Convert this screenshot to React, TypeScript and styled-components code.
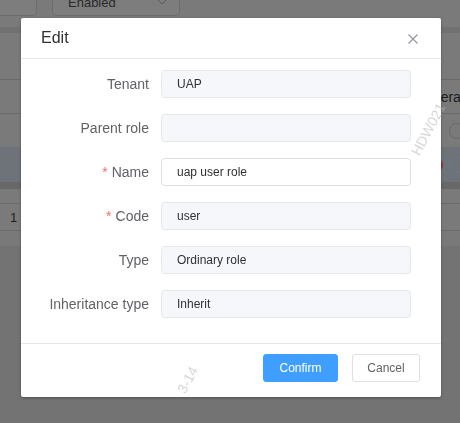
import React from "react";
import styled, { createGlobalStyle } from "styled-components";

const Global = createGlobalStyle`
  html, body { margin: 0; padding: 0; }
  body {
    background: #737373;
    font-family: "Liberation Sans", Arial, sans-serif;
    width: 460px;
    height: 423px;
    overflow: hidden;
  }
`;

const Page = styled.div`
  display: flex;
  flex-direction: column;
  width: 460px;
`;

const Toolbar = styled.div`
  display: flex;
  align-items: flex-end;
  gap: 15px;
  margin-top: -12px;
  height: 28px;
  background: #7a7a7a;
`;

const ToolBox = styled.div<{ $w: number }>`
  box-sizing: border-box;
  width: ${(p) => p.$w}px;
  height: 28px;
  border: 1px solid #6c6c6c;
  border-radius: 4px;
  background: #7d7d7d;
  display: flex;
  align-items: center;
  justify-content: space-between;
  padding: 0 12px 0 15px;
  font-size: 13px;
  color: #2a2a2a;
  &:first-child { margin-left: -40px; width: 77px; }
`;

const Band = styled.div<{ $h: number; $bg: string; $line?: boolean }>`
  box-sizing: border-box;
  height: ${(p) => p.$h}px;
  background: ${(p) => p.$bg};
  border-bottom: ${(p) => (p.$line ? "1px solid #6a6a6a" : "none")};
  display: flex;
  align-items: center;
  font-size: 13px;
  color: #1e1e1e;
`;

const IndexCell = styled.span`
  padding-left: 10px;
`;

const HeaderText = styled.span`
  margin-left: 422px;
  font-size: 14px;
  white-space: nowrap;
  color: #1a1a1a;
`;

const Actions = styled.div`
  display: flex;
  gap: 6px;
  margin-left: 427px;
`;

const Dot = styled.span<{ $c: string; $outline?: boolean }>`
  width: 16px;
  height: 16px;
  border-radius: 50%;
  box-sizing: border-box;
  background: ${(p) => (p.$outline ? "transparent" : p.$c)};
  border: 1px solid ${(p) => p.$c};
  flex: none;
`;

const Overlay = styled.div`
  position: fixed;
  inset: 0;
  display: flex;
  align-items: flex-start;
  padding: 18px 0 0 21px;
`;

const Dialog = styled.div`
  width: 420px;
  background: #fff;
  border-radius: 2px;
  box-shadow: 0 1px 3px rgba(0, 0, 0, 0.3);
  display: flex;
  flex-direction: column;
`;

const Header = styled.div`
  height: 40px;
  border-bottom: 1px solid #e4e7ed;
  display: flex;
  align-items: center;
  justify-content: space-between;
  padding: 0 23px 0 20px;
`;

const Title = styled.span`
  font-size: 16px;
  color: #303133;
  line-height: 24px;
`;

const Close = styled.button`
  border: 0;
  padding: 0;
  background: none;
  width: 10px;
  height: 10px;
  display: flex;
  margin-top: 1px;
`;

const Body = styled.div`
  padding: 11px 30px 25px 20px;
  display: flex;
  flex-direction: column;
  gap: 16px;
`;

const Row = styled.div`
  display: grid;
  grid-template-columns: 120px 250px;
  align-items: center;
`;

const Label = styled.label`
  text-align: right;
  padding-right: 12px;
  font-size: 14px;
  color: #606266;
  line-height: 28px;
  white-space: nowrap;
`;

const Star = styled.span`
  color: #f56c6c;
  margin-right: 4px;
`;

const Input = styled.div<{ $disabled?: boolean }>`
  box-sizing: border-box;
  height: 28px;
  border-radius: 4px;
  border: 1px solid ${(p) => (p.$disabled ? "#e4e7ed" : "#dcdfe6")};
  background: ${(p) => (p.$disabled ? "#f5f7fa" : "#fff")};
  padding: 0 15px;
  font-size: 12px;
  color: #303133;
  display: flex;
  align-items: center;
`;

const Footer = styled.div`
  border-top: 1px solid #e4e7ed;
  padding: 10px 21px 15px;
  display: flex;
  justify-content: flex-end;
  gap: 14px;
`;

const Button = styled.button<{ $primary?: boolean }>`
  box-sizing: border-box;
  height: 28px;
  width: ${(p) => (p.$primary ? 75 : 68)}px;
  border-radius: 3px;
  font-family: "Liberation Sans", Arial, sans-serif;
  font-size: 12px;
  border: 1px solid ${(p) => (p.$primary ? "#409eff" : "#dcdfe6")};
  background: ${(p) => (p.$primary ? "#409eff" : "#fff")};
  color: ${(p) => (p.$primary ? "#fff" : "#606266")};
  padding: 0;
`;

const Watermark = styled.span<{ $x: number; $y: number }>`
  position: fixed;
  left: ${(p) => p.$x}px;
  top: ${(p) => p.$y}px;
  transform: rotate(-62deg);
  transform-origin: left bottom;
  font-size: 14px;
  color: rgba(180, 180, 180, 0.55);
  white-space: nowrap;
  pointer-events: none;
`;

const fields: { label: string; value: string; required?: boolean; disabled?: boolean }[] = [
  { label: "Tenant", value: "UAP", disabled: true },
  { label: "Parent role", value: "", disabled: true },
  { label: "Name", value: "uap user role", required: true },
  { label: "Code", value: "user", required: true, disabled: true },
  { label: "Type", value: "Ordinary role", disabled: true },
  { label: "Inheritance type", value: "Inherit", disabled: true },
];

export default function App() {
  return (
    <>
      <Global />
      <Page>
        <Toolbar>
          <ToolBox $w={77} />
          <ToolBox $w={128}>
            <span>Enabled</span>
            <svg width="10" height="6" viewBox="0 0 10 6">
              <path d="M1 1l4 4 4-4" fill="none" stroke="#5a5a5a" strokeWidth="1" />
            </svg>
          </ToolBox>
        </Toolbar>
        <Band $h={11} $bg="#7a7a7a" />
        <Band $h={6} $bg="#717171" />
        <Band $h={47} $bg="#7a7a7a" $line />
        <Band $h={34} $bg="#7a7a7a" $line>
          <HeaderText>Operation</HeaderText>
        </Band>
        <Band $h={33} $bg="#7a7a7a">
          <Actions>
            <Dot $c="transparent" $outline />
            <Dot $c="#6a6a6a" $outline />
          </Actions>
        </Band>
        <Band $h={35} $bg="#6e7379">
          <Actions>
            <Dot $c="#8a3a3a" />
            <Dot $c="#6a7a8a" $outline />
          </Actions>
        </Band>
        <Band $h={7} $bg="#686868" />
        <Band $h={15} $bg="#7a7a7a" $line />
        <Band $h={27} $bg="#7a7a7a" $line>
          <IndexCell>1</IndexCell>
        </Band>
        <Band $h={15} $bg="#797979" />
      </Page>
      <Overlay>
        <Dialog>
          <Header>
            <Title>Edit</Title>
            <Close aria-label="Close">
              <svg width="10" height="10" viewBox="0 0 10 10">
                <path d="M0.5 0.5l9 9M9.5 0.5l-9 9" stroke="#909399" strokeWidth="1.1" />
              </svg>
            </Close>
          </Header>
          <Body>
            {fields.map((f) => (
              <Row key={f.label}>
                <Label>
                  {f.required && <Star>*</Star>}
                  {f.label}
                </Label>
                <Input $disabled={f.disabled}>{f.value}</Input>
              </Row>
            ))}
          </Body>
          <Footer>
            <Button $primary>Confirm</Button>
            <Button>Cancel</Button>
          </Footer>
        </Dialog>
      </Overlay>
      <Watermark $x={422} $y={142}>HDW021</Watermark>
      <Watermark $x={188} $y={380}>3-14</Watermark>
    </>
  );
}
